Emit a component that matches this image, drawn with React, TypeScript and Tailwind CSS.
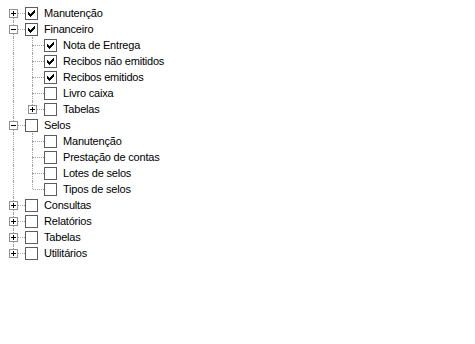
import React from 'react';

interface Node {
  label: string;
  checked?: boolean;
  expanded?: boolean;
  children?: Node[];
}

const tree: Node[] = [
  { label: 'Manutenção', checked: true, children: [{ label: '' }] },
  {
    label: 'Financeiro',
    checked: true,
    expanded: true,
    children: [
      { label: 'Nota de Entrega', checked: true },
      { label: 'Recibos não emitidos', checked: true },
      { label: 'Recibos emitidos', checked: true },
      { label: 'Livro caixa' },
      { label: 'Tabelas', children: [{ label: '' }] },
    ],
  },
  {
    label: 'Selos',
    expanded: true,
    children: [
      { label: 'Manutenção' },
      { label: 'Prestação de contas' },
      { label: 'Lotes de selos' },
      { label: 'Tipos de selos' },
    ],
  },
  { label: 'Consultas', children: [{ label: '' }] },
  { label: 'Relatórios', children: [{ label: '' }] },
  { label: 'Tabelas', children: [{ label: '' }] },
  { label: 'Utilitários', children: [{ label: '' }] },
];

interface Row {
  node: Node;
  guides: boolean[];
  first: boolean;
  last: boolean;
}

function flatten(nodes: Node[], guides: boolean[], rows: Row[]) {
  nodes.forEach((node, i) => {
    const last = i === nodes.length - 1;
    rows.push({ node, guides, first: guides.length === 0 && i === 0, last });
    if (node.expanded && node.children) {
      flatten(node.children, [...guides, !last], rows);
    }
  });
  return rows;
}

function CheckMark() {
  // classic 7x7 tick
  const px: [number, number][] = [
    [6, 0],
    [5, 1], [6, 1],
    [0, 2], [4, 2], [5, 2], [6, 2],
    [0, 3], [1, 3], [3, 3], [4, 3], [5, 3],
    [0, 4], [1, 4], [2, 4], [3, 4], [4, 4],
    [1, 5], [2, 5], [3, 5],
    [2, 6],
  ];
  return (
    <svg width="7" height="7" viewBox="0 0 7 7" shapeRendering="crispEdges">
      {px.map(([x, y]) => (
        <rect key={`${x}-${y}`} x={x} y={y} width="1" height="1" fill="#000" />
      ))}
    </svg>
  );
}

function Expander({ expanded }: { expanded?: boolean }) {
  return (
    <svg width="9" height="9" viewBox="0 0 9 9" shapeRendering="crispEdges" className="relative">
      <rect x="0.5" y="0.5" width="8" height="8" fill="#fff" stroke="#919191" />
      <rect x="2" y="4" width="5" height="1" fill="#000" />
      {!expanded && <rect x="4" y="2" width="1" height="5" fill="#000" />}
    </svg>
  );
}

function TreeRow({ row }: { row: Row }) {
  const { node, guides, first, last } = row;
  return (
    <div className="flex h-4 items-center">
      {guides.map((g, i) => (
        <div key={i} className="flex h-4 w-[19px] shrink-0 justify-center">
          {g && <div className="h-4 border-l border-dotted border-[#a0a0a0]" />}
        </div>
      ))}
      <div className="relative flex h-4 w-[19px] shrink-0 items-center justify-center">
        {/* tree connector lines sit under the expander box */}
        <div className="absolute inset-y-0 left-[9px] flex flex-col">
          <div className={`h-2 border-l border-dotted ${first ? 'border-transparent' : 'border-[#a0a0a0]'}`} />
          <div className={`h-2 border-l border-dotted ${last ? 'border-transparent' : 'border-[#a0a0a0]'}`} />
        </div>
        <div className="absolute left-[10px] top-2 w-[11px] border-t border-dotted border-[#a0a0a0]" />
        {node.children && <Expander expanded={node.expanded} />}
      </div>
      <div className="ml-[2px] flex h-[13px] w-[13px] shrink-0 items-center justify-center border border-[#5c5c5c] bg-white">
        {node.checked && <CheckMark />}
      </div>
      <span className="ml-[6px] whitespace-nowrap text-[11px] leading-4 tracking-[-0.2px] text-black">
        {node.label}
      </span>
    </div>
  );
}

export default function App() {
  const rows = flatten(tree, [], []);
  return (
    <div
      className="h-[344px] w-[475px] bg-white pl-1 pt-[5px]"
      style={{ fontFamily: '"Liberation Sans", Arial, sans-serif' }}
    >
      {rows.map((row, i) => (
        <TreeRow key={i} row={row} />
      ))}
    </div>
  );
}
